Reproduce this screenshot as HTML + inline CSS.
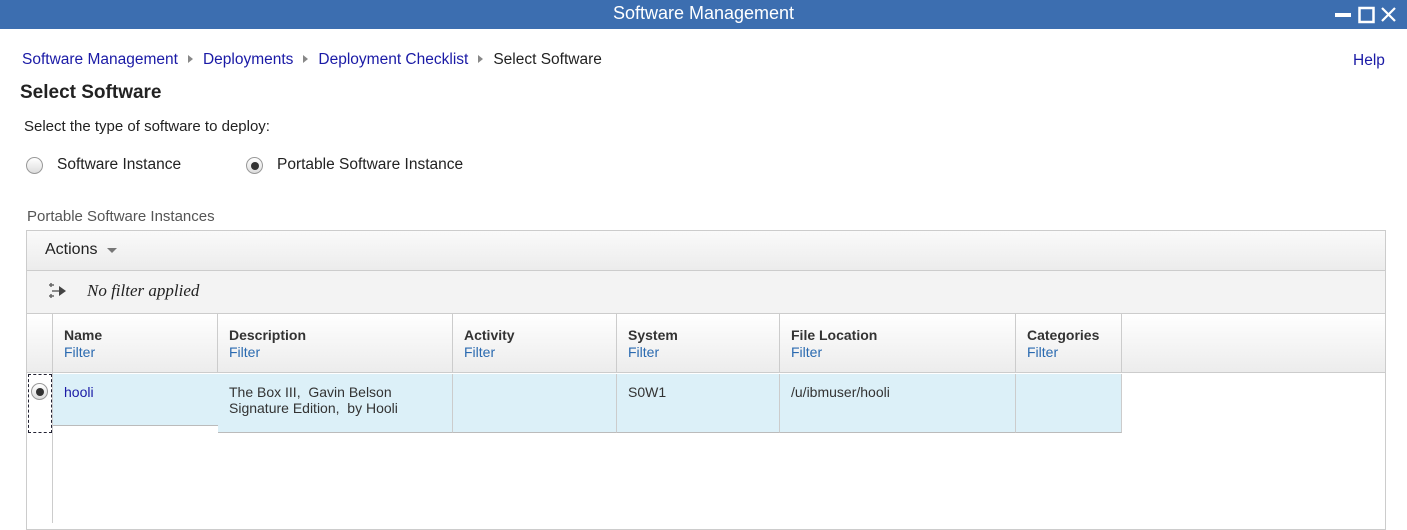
<!DOCTYPE html>
<html><head><style>
body{margin:0;width:1407px;height:517px;overflow:hidden;background:#fff;font-family:"Liberation Sans",Arial,sans-serif;position:relative}
.a{position:absolute}
.tb{left:0;top:0;width:1407px;height:29px;background:#3c6eb0;color:#fff;font-size:18px;text-align:center;line-height:27px}
.lk{color:#1a1aa6}
.bc{top:51px;font-size:15.5px;color:#222}
.arr{display:inline-block;width:0;height:0;border-left:5px solid #888;border-top:4px solid transparent;border-bottom:4px solid transparent;margin:0 10px 1px 10px}
.rad{width:17px;height:17px;border-radius:50%;border:1px solid #999;background:linear-gradient(#fff,#ddd);box-sizing:border-box}
.hd{top:314px;height:59px;background:linear-gradient(#fff,#ececec);border-right:1px solid #ccc;border-bottom:1px solid #ccc;box-sizing:border-box;padding:13px 0 0 11px;font-size:14px;font-weight:bold;color:#333}
.hd span{display:block;font-weight:normal;color:#2a6ab0;font-size:14px;margin-top:1px}
.cl{top:374px;height:59px;background:#dcf0f8;border-right:1px solid #ccc;border-bottom:1px solid #bbb;box-sizing:border-box;padding:10px 0 0 11px;font-size:14px;color:#333;line-height:16px}
</style></head><body>
<div class="a tb">Software Management</div>
<svg class="a" style="left:1334px;top:6px" width="70" height="18"><rect x="1" y="7" width="16" height="4" fill="#fff"/><rect x="25.5" y="2" width="14" height="14" fill="none" stroke="#fff" stroke-width="2.5"/><path d="M48 2 L61 15 M61 2 L48 15" stroke="#fff" stroke-width="2.2"/></svg>
<div class="a bc" style="left:22px"><span class="lk">Software Management</span><span class="arr"></span><span class="lk">Deployments</span><span class="arr"></span><span class="lk">Deployment Checklist</span><span class="arr"></span>Select Software</div>
<div class="a lk" style="left:1353px;top:52px;font-size:15.5px">Help</div>
<div class="a" style="left:20px;top:82px;font-size:19px;font-weight:bold;color:#222">Select Software</div>
<div class="a" style="left:24px;top:118px;font-size:15px;color:#222">Select the type of software to deploy:</div>
<div class="a rad" style="left:26px;top:157px"></div>
<div class="a" style="left:57px;top:156px;font-size:15.5px;color:#222">Software Instance</div>
<div class="a rad" style="left:246px;top:157px"><div style="position:absolute;left:3.5px;top:3.5px;width:8px;height:8px;border-radius:50%;background:#333"></div></div>
<div class="a" style="left:277px;top:156px;font-size:15.5px;color:#222">Portable Software Instance</div>
<div class="a" style="left:27px;top:208px;font-size:15px;color:#555">Portable Software Instances</div>
<div class="a" style="left:26px;top:230px;width:1360px;height:300px;border:1px solid #ccc;box-sizing:border-box"></div>
<div class="a" style="left:27px;top:231px;width:1358px;height:39px;background:linear-gradient(#fafafa,#ececec);border-bottom:1px solid #ccc"></div>
<div class="a" style="left:45px;top:241px;font-size:16px;color:#222">Actions</div>
<div class="a" style="left:107px;top:248px;border-top:5px solid #777;border-left:5px solid transparent;border-right:5px solid transparent"></div>
<div class="a" style="left:27px;top:271px;width:1358px;height:42px;background:#f3f3f3;border-bottom:1px solid #ccc"></div>
<svg class="a" style="left:47px;top:282px" width="22" height="18"><path d="M2 3h5M4 1v4M2 14h5M4 12v4M5 9h9" stroke="#666" stroke-width="1.5" fill="none"/><path d="M12 4l7 5-7 5z" fill="#444"/></svg>
<div class="a" style="left:87px;top:281px;font-family:'Liberation Serif',serif;font-style:italic;font-size:17px;color:#222">No filter applied</div>
<div class="a" style="left:27px;top:314px;width:26px;height:59px;background:linear-gradient(#fff,#ececec);border-right:1px solid #ccc;border-bottom:1px solid #ccc;box-sizing:border-box"></div>
<div class="a" style="left:52px;top:373px;width:1px;height:150px;background:#ccc"></div>
<div class="a hd" style="left:53px;width:165px">Name<span>Filter</span></div>
<div class="a hd" style="left:218px;width:235px">Description<span>Filter</span></div>
<div class="a hd" style="left:453px;width:164px">Activity<span>Filter</span></div>
<div class="a hd" style="left:617px;width:163px">System<span>Filter</span></div>
<div class="a hd" style="left:780px;width:236px">File Location<span>Filter</span></div>
<div class="a hd" style="left:1016px;width:106px">Categories<span>Filter</span></div>
<div class="a" style="left:1122px;top:314px;width:263px;height:59px;background:linear-gradient(#fff,#ececec);border-bottom:1px solid #ccc;box-sizing:border-box"></div>
<div class="a" style="left:28px;top:374px;width:24px;height:59px;border:1px dashed #223;box-sizing:border-box"></div>
<div class="a rad" style="left:31px;top:383px"><div style="position:absolute;left:3.5px;top:3.5px;width:8px;height:8px;border-radius:50%;background:#333"></div></div>
<div class="a cl" style="left:53px;width:165px;height:52px;border-right:none"><span class="lk">hooli</span></div>
<div class="a cl" style="left:218px;width:235px">The Box III,&nbsp; Gavin Belson<br>Signature Edition,&nbsp; by Hooli</div>
<div class="a cl" style="left:453px;width:164px"></div>
<div class="a cl" style="left:617px;width:163px">S0W1</div>
<div class="a cl" style="left:780px;width:236px">/u/ibmuser/hooli</div>
<div class="a cl" style="left:1016px;width:106px"></div>
</body></html>
